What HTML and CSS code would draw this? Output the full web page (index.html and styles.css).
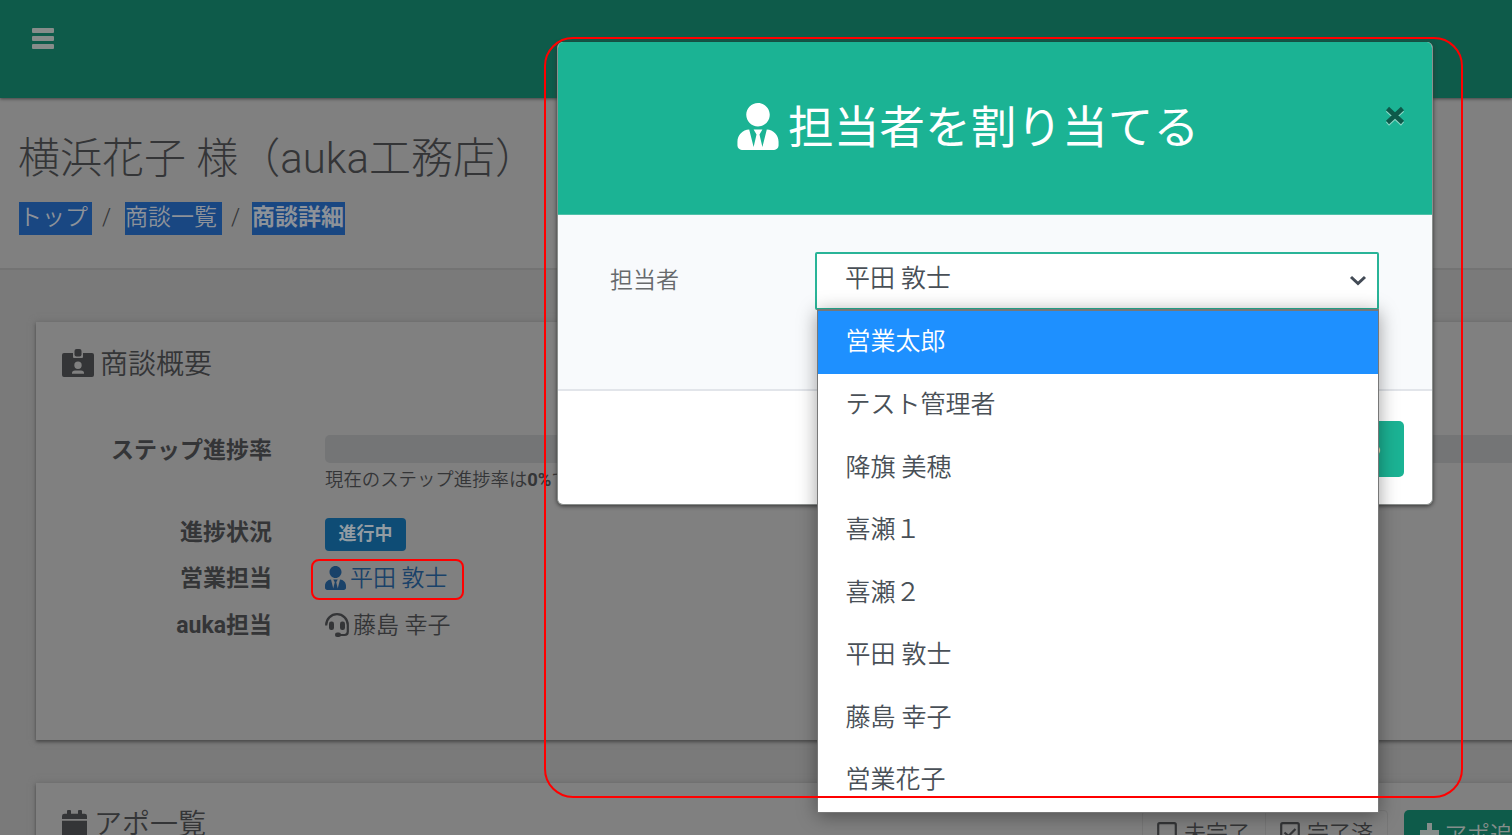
FILE: index.html
```
<!DOCTYPE html>
<html lang="ja">
<head>
<meta charset="utf-8">
<title>商談詳細</title>
<link rel="stylesheet" href="styles.css">
</head>
<body>
<svg class="defs" aria-hidden="true">
  <symbol id="user-tie" viewBox="0 0 448 512"><path d="M224 256c70.700 0 128-57.300 128-128S294.700 0 224 0 96 57.300 96 128s57.300 128 128 128zm95.800 32.600L272 480l-32-136 32-56h-96l32 56-32 136-47.800-191.400C56.900 292 0 350.300 0 422.400V464c0 26.500 21.500 48 48 48h352c26.500 0 48-21.500 48-48v-41.600c0-72.100-56.900-130.400-128.200-133.800z"/></symbol>
</svg>
<div class="page">
  <header class="topbar"><div class="burger"><i></i><i></i><i></i></div></header>
  <section class="heading">
    <h1>横浜花子 様（auka工務店）</h1>
    <nav class="crumbs"><a class="c1">トップ</a><span>/</span><a class="c2">商談一覧</a><span>/</span><a class="c3">商談詳細</a></nav>
  </section>
  <main class="content">
    <section class="card summary">
      <h2><svg class="badge-icon" viewBox="0 0 32 28"><path fill-rule="evenodd" d="M2 4H11V8Q11 9 12 9H20Q21 9 21 8V4H30Q32 4 32 6V26Q32 28 30 28H2Q0 28 0 26V6Q0 4 2 4ZM16 12.500a3.700 3.700 0 1 0 0 7.400a3.700 3.700 0 1 0 0-7.400ZM10 24.700H22V24Q22 21.400 19 21.400H13Q10 21.400 10 24Z"/><rect x="12.500" y="0" width="7" height="7.500" rx="2"/></svg>商談概要</h2>
      <dl>
        <dt class="r1">ステップ進捗率</dt>
        <dd class="r1"><div class="progress"></div><p class="note">現在のステップ進捗率は<b>0%</b>です</p></dd>
        <dt class="r2">進捗状況</dt><dd class="r2"><span class="tag">進行中</span></dd>
        <dt class="r3">営業担当</dt><dd class="r3"><a class="person"><svg class="tie-sm"><use href="#user-tie"/></svg>平田 敦士</a></dd>
        <dt class="r4">auka担当</dt><dd class="r4"><svg class="headset" viewBox="0 0 24 24"><path class="line" d="M1.200 12.500V12A10.800 10.800 0 0 1 22.800 12V18.500Q22.800 22 19.500 22H13"/><rect x="4" y="8.500" width="5" height="8.500" rx="2.200"/><rect x="15" y="8.500" width="5" height="8.500" rx="2.200"/><rect x="10" y="19.600" width="6" height="4.400" rx="2.100"/></svg>藤島 幸子</dd>
      </dl>
    </section>
    <section class="card appts">
      <h2><svg class="cal" viewBox="0 0 25 29"><path d="M0 10.800H25V26Q25 28.600 22.500 28.600H2.500Q0 28.600 0 26ZM0 9V6Q0 3.700 2.500 3.700H5V1Q5 0 6 0H8Q9 0 9 1V3.700H16V1Q16 0 17 0H19Q20 0 20 1V3.700H22.500Q25 3.700 25 6V9Z"/></svg>アポ一覧</h2>
      <div class="actions">
        <div class="group">
          <span class="opt"><svg class="check" viewBox="0 0 20 20"><rect x="1.200" y="1.200" width="17.600" height="17.600" rx="1.500"/></svg>未完了</span>
          <span class="opt"><svg class="check" viewBox="0 0 20 20"><rect x="1.200" y="1.200" width="17.600" height="17.600" rx="1.500"/><path d="M4.500 10.500L8.500 14L15.500 7"/></svg>完了済</span>
        </div>
        <span class="add"><svg viewBox="0 0 21 21"><path d="M8 1H13V8H20V13H13V20H8V13H1V8H8Z"/></svg>アポ追加</span>
      </div>
    </section>
  </main>
</div>

<div class="modal">
  <div class="modal-head">
    <div class="modal-title"><svg class="tie-lg"><use href="#user-tie"/></svg>担当者を割り当てる</div>
    <svg class="close" viewBox="0 0 20 21"><path class="glow" d="M2.500 4L17.500 18M17.500 4L2.500 18"/><path d="M2.500 2.500L17.500 16.500M17.500 2.500L2.500 16.500"/></svg>
  </div>
  <div class="modal-body">
    <label>担当者</label>
    <div class="select"><span>平田 敦士</span><svg class="chev" viewBox="0 0 18 11"><path d="M2 2L9 8.500L16 2"/></svg></div>
  </div>
  <div class="modal-foot"><span class="submit">割り当てる</span></div>
</div>

<ul class="dropdown">
  <li class="active">営業太郎</li><li>テスト管理者</li><li>降旗 美穂</li><li>喜瀬１</li><li>喜瀬２</li><li>平田 敦士</li><li>藤島 幸子</li><li>営業花子</li>
</ul>
<div class="mark mark-modal"></div>
<div class="mark mark-person"></div>
</body>
</html>
```
FILE: styles.css
```
* { box-sizing: border-box; }
html, body { margin: 0; height: 835px; overflow: hidden; }
body { position: relative; width: 1512px; font-family: Roboto, "Noto Sans CJK JP", sans-serif; font-size: 23px; font-weight: 350; color: #343537; background: #7a7a7a; }
h1, h2, p, dl, dd, ul { margin: 0; padding: 0; font-weight: 350; }
.defs { position: absolute; width: 0; height: 0; }
svg { flex: none; fill: currentColor; }
.page { width: 1512px; height: 835px; overflow: hidden; }
.topbar { height: 98px; padding: 28px 32px; background: #0e5b4a; box-shadow: 0 1px 3px #444; position: relative; }
.burger { display: flex; flex-direction: column; gap: 3px; width: 22px; }
.burger i { height: 5px; border-radius: 1px; background: #868c8a; }
.heading { height: 172px; padding: 33px 18px 0; background: #808080; border-bottom: 2px solid #737373; }
h1 { font-size: 42px; line-height: 56px; white-space: nowrap; font-weight: 300; }
.crumbs { display: flex; margin-top: 15px; padding-left: 1px; line-height: 31px; }
.crumbs a { height: 33px; background: #194782; color: #8d9299; white-space: nowrap; }
.crumbs span { width: 33px; padding-left: 10px; }
.crumbs .c1 { width: 73px; }
.crumbs .c2 { width: 97px; }
.crumbs .c2 + span { width: 30px; padding-left: 9px; }
.crumbs .c3 { width: 93px; font-weight: 700; }
.content { padding: 52px 0 0 36px; display: flex; flex-direction: column; gap: 43px; }
.card { width: 1560px; background: #808080; box-shadow: 0 2px 3px #4b4b4b, 0 0 7px #6c6c6c; }
h2 { display: flex; align-items: center; font-size: 28px; line-height: 40px; white-space: nowrap; }
.summary { height: 418px; padding: 23px 0 0 26px; }
.badge-icon { width: 32px; height: 28px; margin: -5px 6px 0 0; }
dl { display: grid; grid-template-columns: 210px 1210px; column-gap: 53px; grid-template-rows: 82px 46px 47px 47px; margin-top: 48px; line-height: 36px; }
dt { text-align: right; font-weight: 700; white-space: nowrap; }
dd { white-space: nowrap; display: flex; align-items: center; height: 36px; }
dd.r1 { display: block; height: auto; padding-top: 2px; }
.progress { height: 28px; background: #747576; border-radius: 5px; }
.note { font-size: 18.400px; line-height: 34px; }
.tag { width: 81px; height: 33px; margin-top: 2px; border-radius: 4px; background: #0e4c75; color: #929ca3; font-size: 18px; font-weight: 700; line-height: 31px; text-align: center; }
.person { display: flex; align-items: center; color: #1a4269; }
.tie-sm { width: 21px; height: 24px; margin: -2px 4px 0 0; }
.headset { width: 24px; height: 24px; margin: -2px 4px 0 0; }
.headset .line { fill: none; stroke: currentColor; stroke-width: 2.200; }
.appts { height: 160px; padding: 22px 0 0 26px; display: flex; }
.cal { width: 25px; height: 29px; margin: -2px 7px 0 0; }
.appts h2 { width: 145px; height: 40px; }
.actions { display: flex; gap: 16px; margin: 5px 0 0 935px; height: 54px; }
.group { display: flex; width: 246px; border: 1px solid #777; border-radius: 4px; }
.opt { width: 123px; padding: 0 0 12px 14px; display: flex; align-items: center; gap: 7px; font-size: 22px; white-space: nowrap; }
.opt + .opt { border-left: 1px solid #777; }
.check { width: 20px; height: 20px; margin-top: 2px; }
.check * { fill: none; stroke: currentColor; stroke-width: 2.200; }
.add { display: flex; align-items: center; gap: 4px; width: 160px; padding: 0 0 9px 15px; border-radius: 5px; background: #0e5b4a; color: #858e8b; white-space: nowrap; }
.add svg { width: 21px; height: 21px; margin-top: -1px; }

.modal { position: absolute; left: 557px; top: 42px; width: 876px; height: 463px; border: 1px solid #8b8f8d; border-top: 0; border-radius: 6px; overflow: hidden; background: #fff; box-shadow: 0 1px 4px #333; }
.modal-head { display: flex; height: 173px; padding: 47px 26px 0 179px; background: #1bb394; color: #fff; border-bottom: 1px solid #50c1a9; }
.modal-title { display: flex; align-items: center; width: 648px; height: 70px; font-size: 45.700px; font-weight: 400; white-space: nowrap; }
.tie-lg { width: 42px; height: 47px; margin: 5px 9px 0 0; }
.close { width: 20px; height: 21px; margin-top: 17px; }
.close path { fill: none; stroke: #0e5a4a; stroke-width: 4.500; }
.close .glow { stroke: #8bd7c6; }
.modal-body { display: flex; height: 176px; padding: 37px 53px 0 52px; background: #f8fafc; border-bottom: 2px solid #e2e5ea; }
label { width: 205px; padding-top: 1px; line-height: 56px; color: #676a6c; }
.select { width: 564px; height: 58px; padding: 0 10px 0 28px; display: flex; justify-content: space-between; align-items: center; border: 2px solid #29b498; border-radius: 2px; background: #fff; color: #495057; font-size: 25px; }
.select span { line-height: 50px; padding-bottom: 5px; }
.chev { width: 18px; height: 11px; margin-top: -2px; }
.chev path { fill: none; stroke: #434b56; stroke-width: 3; }
.modal-foot { display: flex; justify-content: flex-end; padding: 30px 28px 0; }
.submit { width: 150px; height: 56px; padding-right: 7px; border-radius: 5px; background: #1bb394; color: #fff; line-height: 54px; text-align: center; }

.dropdown { position: absolute; left: 817px; top: 309px; width: 562px; height: 504px; list-style: none; border: 1px solid #777; border-top-width: 2px; background: #fff; box-shadow: 0 3px 18px rgba(0,0,0,.38); color: #495057; font-size: 25px; }
.dropdown li { height: 62.500px; padding-left: 27.500px; line-height: 61px; white-space: nowrap; font-weight: 350; }
.dropdown .active { height: 63px; line-height: 62px; background: #1e90ff; color: #fff; }
.mark { position: absolute; border: 2px solid #f00; pointer-events: none; }
.mark-modal { left: 544px; top: 37px; width: 919px; height: 761px; border-radius: 29px; }
.mark-person { left: 311px; top: 559px; width: 153px; height: 41px; border-radius: 8px; }
```
